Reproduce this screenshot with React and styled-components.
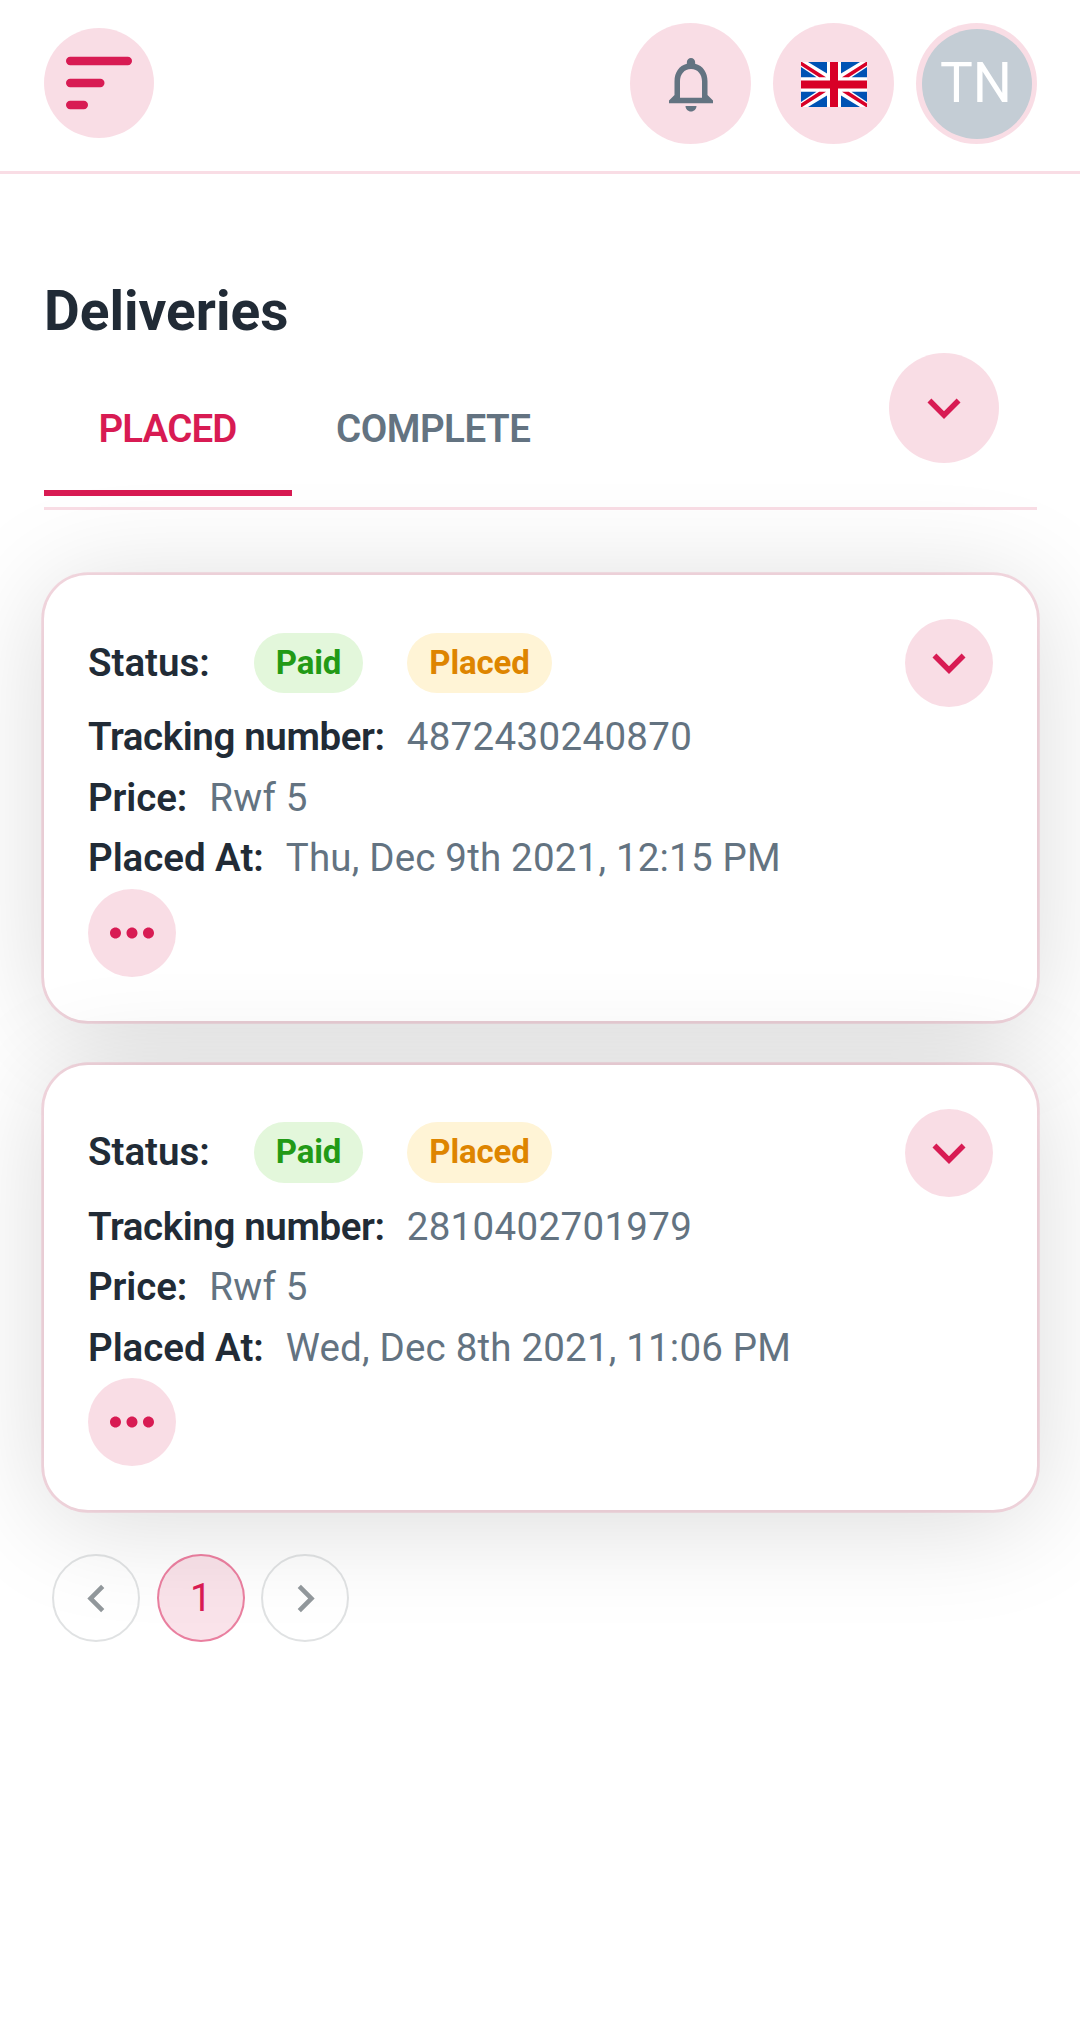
import React from "react";
import styled, { createGlobalStyle } from "styled-components";

const GlobalStyle = createGlobalStyle`
  * { box-sizing: border-box; }
  html { overflow-x: hidden; }
  body {
    margin: 0;
    background: #fff;
    color: #212b36;
    font-family: Roboto, "Liberation Sans", sans-serif;
    font-size: 38.5px;
    line-height: 60.5px;
    -webkit-font-smoothing: antialiased;
  }
`;

const pink = "#d81b53";
const tint = "rgba(216, 27, 83, 0.15)";

const Page = styled.div`
  min-height: 2030px;
  overflow: hidden;
`;

const Header = styled.header`
  display: flex;
  align-items: center;
  justify-content: space-between;
  height: 174px;
  padding: 0 43px 4px 44px;
  border-bottom: 3px solid ${tint};
`;

const HeaderActions = styled.div`
  display: flex;
  gap: 22px;
`;

const IconButton = styled.button`
  display: flex;
  align-items: center;
  justify-content: center;
  flex: none;
  width: ${(p) => p.$size}px;
  height: ${(p) => p.$size}px;
  padding: 0;
  border: 0;
  border-radius: 50%;
  background: ${tint};
  color: ${(p) => p.$color || pink};
`;

const MenuButton = styled(IconButton)`
  margin-bottom: 1px;
`;

const Avatar = styled.span`
  display: flex;
  align-items: center;
  justify-content: center;
  width: 110px;
  height: 110px;
  padding: 0 1px 1px 0;
  border-radius: 50%;
  background: #c4cdd5;
  color: #fff;
  font: 400 55px/1 Roboto, sans-serif;
`;

const Main = styled.main`
  padding: 104px 43px 0 44px;
`;

const Title = styled.h1`
  margin: 0;
  font-size: 55px;
  font-weight: 700;
  line-height: 66px;
`;

const TabBar = styled.div`
  display: flex;
  justify-content: space-between;
  height: 165.5px;
  padding: 9px 38px 0 0;
  border-bottom: 3px solid ${tint};
`;

const Tabs = styled.nav`
  display: flex;
  align-self: flex-end;
  gap: 44px;
  height: 134px;
  margin-bottom: 10.5px;
`;

const Tab = styled.a`
  display: flex;
  align-items: center;
  justify-content: center;
  width: ${(p) => (p.$active ? "248px" : "auto")};
  padding: 6px ${(p) => (p.$active ? 1 : 0)}px 0 0;
  border-bottom: 6px solid ${(p) => (p.$active ? pink : "transparent")};
  color: ${(p) => (p.$active ? pink : "#637381")};
  font-weight: 600;
  letter-spacing: ${(p) => (p.$active ? -0.85 : -0.5)}px;
`;

const CardList = styled.section`
  display: grid;
  gap: 44px;
  padding-top: 65.5px;
`;

const Card = styled.article`
  padding: 44px;
  border-radius: 44px;
  background: #fff;
  box-shadow: 0 0 0 2.75px ${tint}, 0 11px 110px rgba(0, 0, 0, 0.15);
`;

const StatusRow = styled.div`
  display: flex;
  align-items: center;
  height: 88px;
`;

const Label = styled.strong`
  font-weight: 600;
  letter-spacing: ${(p) => p.$tracking || 0}px;
`;

const Badge = styled.span`
  height: 60.5px;
  margin-left: 44px;
  padding: 0 22px;
  border-radius: 44px;
  background: ${(p) => (p.$tone === "green" ? "#e3f7db" : "#fff4d6")};
  color: ${(p) => (p.$tone === "green" ? "#229a16" : "#de8500")};
  font-size: 33px;
  font-weight: 700;
  letter-spacing: -0.15px;
`;

const Spacer = styled.span`
  flex: 1;
`;

const Field = styled.div`
  display: flex;
  gap: 22px;
  height: 60.5px;
  white-space: nowrap;
`;

const Value = styled.span`
  color: #637381;
  letter-spacing: ${(p) => p.$tracking || 0.24}px;
`;

const Pagination = styled.nav`
  display: flex;
  gap: 16.5px;
  padding: 44px 8.25px;
`;

const PageButton = styled.button`
  display: flex;
  align-items: center;
  justify-content: center;
  width: 88px;
  height: 88px;
  padding: 0;
  border: 2px solid ${(p) => (p.$active ? "rgba(216, 27, 83, 0.5)" : "rgba(145, 150, 155, 0.28)")};
  border-radius: 50%;
  background: ${(p) => (p.$active ? "rgba(216, 27, 83, 0.12)" : "transparent")};
  color: ${(p) => (p.$active ? pink : "#91979b")};
  font: 400 38.5px/1 Roboto, sans-serif;
`;

const Icon = ({ d, size = 66 }) => (
  <svg width={size} height={size} viewBox="0 0 24 24" fill="currentColor" aria-hidden="true">
    <path d={d} />
  </svg>
);

const icons = {
  bell: "M12 22c1.1 0 2-.9 2-2h-4c0 1.1.9 2 2 2zm6-6v-5c0-3.07-1.63-5.64-4.5-6.32V4c0-.83-.67-1.5-1.5-1.5s-1.5.67-1.5 1.5v.68C7.64 5.36 6 7.92 6 11v5l-2 2v1h16v-1l-2-2zm-2 1H8v-6c0-2.48 1.51-4.5 4-4.5s4 2.02 4 4.5v6z",
  down: "M7.41 8.59 12 13.17l4.59-4.58L18 10l-6 6-6-6 1.41-1.41z",
  more: "M6 10c-1.1 0-2 .9-2 2s.9 2 2 2 2-.9 2-2-.9-2-2-2zm12 0c-1.1 0-2 .9-2 2s.9 2 2 2 2-.9 2-2-.9-2-2-2zm-6 0c-1.1 0-2 .9-2 2s.9 2 2 2 2-.9 2-2-.9-2-2-2z",
  left: "M15.41 7.41 14 6l-6 6 6 6 1.41-1.41L10.83 12z",
  right: "M10 6 8.59 7.41 13.17 12l-4.58 4.59L10 18l6-6z",
};

const MenuIcon = () => (
  <svg width="66" height="54" viewBox="0 0 66 54" fill="currentColor" aria-hidden="true">
    <rect y="0.8" width="66" height="8.4" rx="4.2" />
    <rect y="22.8" width="38.5" height="8.4" rx="4.2" />
    <rect y="44.8" width="22" height="8.4" rx="4.2" />
  </svg>
);

const Flag = styled.svg`
  margin-top: 1px;
`;

const BritishFlag = () => (
  <Flag width="66" height="45" viewBox="0 0 66 45" aria-hidden="true">
    <rect width="66" height="45" fill="#fff" />
    <path
      fill="#0052b4"
      d="M7 0H26V11.5ZM40 0H59L40 11.5ZM0 5V15.2H15.5ZM66 5V15.2H50.5ZM0 29.8V40L15.5 29.8ZM66 29.8V40L50.5 29.8ZM26 33.5V45H7ZM40 33.5V45H59Z"
    />
    <path
      fill="#d80027"
      d="M29 0H37V18.4H66V26.6H37V45H29V26.6H0V18.4H29ZM0 0V3.6L18.2 15.2H25L1 0ZM66 0V3.6L47.8 15.2H41L65 0ZM0 45V41.4L18.2 29.8H25L1 45ZM66 45V41.4L47.8 29.8H41L65 45Z"
    />
  </Flag>
);

const deliveries = [
  { tracking: "4872430240870", price: "Rwf 5", placedAt: "Thu, Dec 9th 2021, 12:15 PM" },
  { tracking: "2810402701979", price: "Rwf 5", placedAt: "Wed, Dec 8th 2021, 11:06 PM" },
];

const DeliveryCard = ({ tracking, price, placedAt }) => (
  <Card>
    <StatusRow>
      <Label>Status:</Label>
      <Badge $tone="green">Paid</Badge>
      <Badge $tone="amber">Placed</Badge>
      <Spacer />
      <IconButton $size={88} aria-label="Expand"><Icon d={icons.down} /></IconButton>
    </StatusRow>
    <Field><Label $tracking={-0.38}>Tracking number:</Label><Value $tracking={0.33}>{tracking}</Value></Field>
    <Field><Label $tracking={-0.1}>Price:</Label><Value>{price}</Value></Field>
    <Field><Label $tracking={-0.05}>Placed At:</Label><Value $tracking={0.19}>{placedAt}</Value></Field>
    <IconButton $size={88} aria-label="More"><Icon d={icons.more} /></IconButton>
  </Card>
);

export default function App() {
  return (
    <Page>
      <GlobalStyle />
      <Header>
        <MenuButton $size={110} aria-label="Menu"><MenuIcon /></MenuButton>
        <HeaderActions>
          <IconButton $size={121} $color="#637381" aria-label="Notifications"><Icon d={icons.bell} /></IconButton>
          <IconButton $size={121} aria-label="Language"><BritishFlag /></IconButton>
          <IconButton $size={121} aria-label="Account"><Avatar>TN</Avatar></IconButton>
        </HeaderActions>
      </Header>
      <Main>
        <Title>Deliveries</Title>
        <TabBar>
          <Tabs>
            <Tab $active>PLACED</Tab>
            <Tab>COMPLETE</Tab>
          </Tabs>
          <IconButton $size={110} aria-label="Filters"><Icon d={icons.down} /></IconButton>
        </TabBar>
        <CardList>
          {deliveries.map((d) => <DeliveryCard key={d.tracking} {...d} />)}
        </CardList>
        <Pagination>
          <PageButton aria-label="Previous"><Icon d={icons.left} size={55} /></PageButton>
          <PageButton $active>1</PageButton>
          <PageButton aria-label="Next"><Icon d={icons.right} size={55} /></PageButton>
        </Pagination>
      </Main>
    </Page>
  );
}
